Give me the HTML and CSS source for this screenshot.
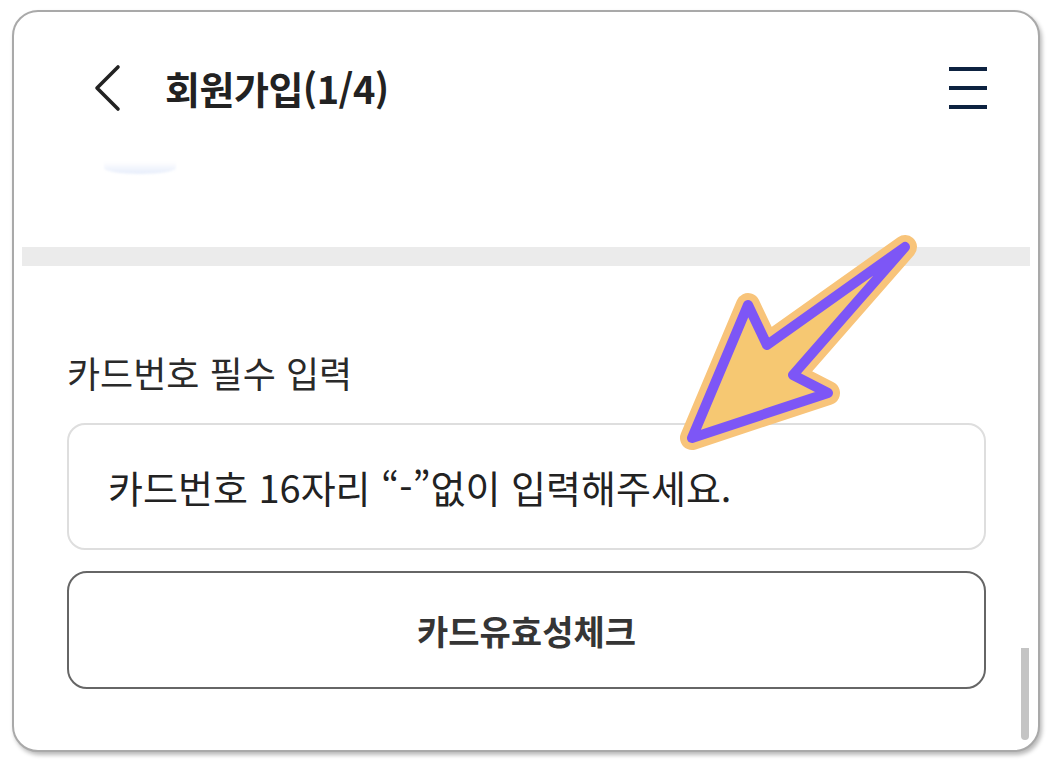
FILE: index.html
```html
<!DOCTYPE html>
<html lang="ko">
<head>
<meta charset="utf-8">
<title>회원가입(1/4)</title>
<link rel="stylesheet" href="styles.css">
</head>
<body>
<div class="frame">
  <header class="header">
    <svg class="back" width="30" height="48" viewBox="0 0 30 48"><path d="M26 3 L5 24 L26 45" fill="none" stroke="#222" stroke-width="3.6" stroke-linecap="round" stroke-linejoin="round"/></svg>
    <h1 class="title">회원가입(1/4)</h1>
    <div class="spacer"></div>
    <svg class="menu" width="38" height="46" viewBox="0 0 38 46"><g fill="#0d2240"><rect x="0" y="2" width="38" height="4"/><rect x="0" y="21" width="38" height="4"/><rect x="0" y="40" width="38" height="4"/></g></svg>
  </header>
  <div class="scrolled"><div class="blob"></div></div>
  <div class="divider"></div>
  <section class="form">
    <label class="label">카드번호 필수 입력</label>
    <div class="input">카드번호 16자리 “-”없이 입력해주세요.</div>
    <button class="btn">카드유효성체크</button>
  </section>
  <div class="scrollbar"></div>
</div>
<svg class="arrow" width="1052" height="766" viewBox="0 0 1052 766">
  <polygon points="905,247 767,345 748,305 692,438 828,393 793,375" fill="none" stroke="#f8c47a" stroke-width="24" stroke-linejoin="round"/>
  <polygon points="905,247 767,345 748,305 692,438 828,393 793,375" fill="#f6c872" stroke="#7d56f6" stroke-width="10" stroke-linejoin="round"/>
</svg>
</body>
</html>
```
FILE: styles.css
```css
html, body {
  margin: 0;
  padding: 0;
  background: #ffffff;
}
body {
  position: relative;
  width: 1052px;
  height: 766px;
  overflow: hidden;
  font-family: "Noto Sans CJK KR", "Noto Sans", sans-serif;
  color: #222;
}
.frame {
  position: relative;
  margin: 10px 0 0 12px;
  width: 1028px;
  height: 742px;
  box-sizing: border-box;
  border: 2px solid #a9a9a9;
  border-radius: 26px;
  box-shadow: 2px 3px 4px rgba(0,0,0,0.28);
  background: #fff;
  overflow: hidden;
  display: flex;
  flex-direction: column;
}
.header {
  display: flex;
  align-items: center;
  height: 80px;
  margin-top: 36px;
  padding: 0 51px 0 78px;
}
.back { flex: none; }
.title {
  margin: 0 0 0 43px;
  font-size: 38px;
  line-height: 48px;
  font-weight: 700;
  color: #222;
  letter-spacing: -0.5px;
}
.spacer { flex: 1; }
.menu { flex: none; }
.scrolled {
  height: 119px;
}
.blob {
  margin: 34px 0 0 90px;
  width: 72px;
  height: 12px;
  border-radius: 0 0 50% 50%;
  background: linear-gradient(#ffffff, #e6edfb);
  filter: blur(1px);
}
.divider {
  height: 19px;
  margin: 0 8px;
  background: #ebebeb;
}
.form {
  display: flex;
  flex-direction: column;
  padding: 84px 52px 0 53px;
}
.label {
  font-size: 36px;
  line-height: 44px;
  color: #2a2a2a;
  margin-bottom: 29px;
}
.input {
  height: 127px;
  box-sizing: border-box;
  border: 2px solid #dedede;
  border-radius: 18px;
  padding-left: 39px;
  display: flex;
  align-items: center;
  font-size: 38px;
  color: #222;
}
.btn {
  margin-top: 21px;
  height: 118px;
  box-sizing: border-box;
  border: 2px solid #666;
  border-radius: 20px;
  background: #fff;
  font-family: "Noto Sans CJK KR", "Noto Sans", sans-serif;
  font-size: 34px;
  font-weight: 700;
  color: #353535;
}
.scrollbar {
  position: absolute;
  right: 9px;
  top: 636px;
  width: 8px;
  height: 92px;
  background: #c4c4c4;
  border-radius: 0 0 4px 4px;
}
.arrow {
  position: absolute;
  left: 0;
  top: 0;
  pointer-events: none;
}
```
